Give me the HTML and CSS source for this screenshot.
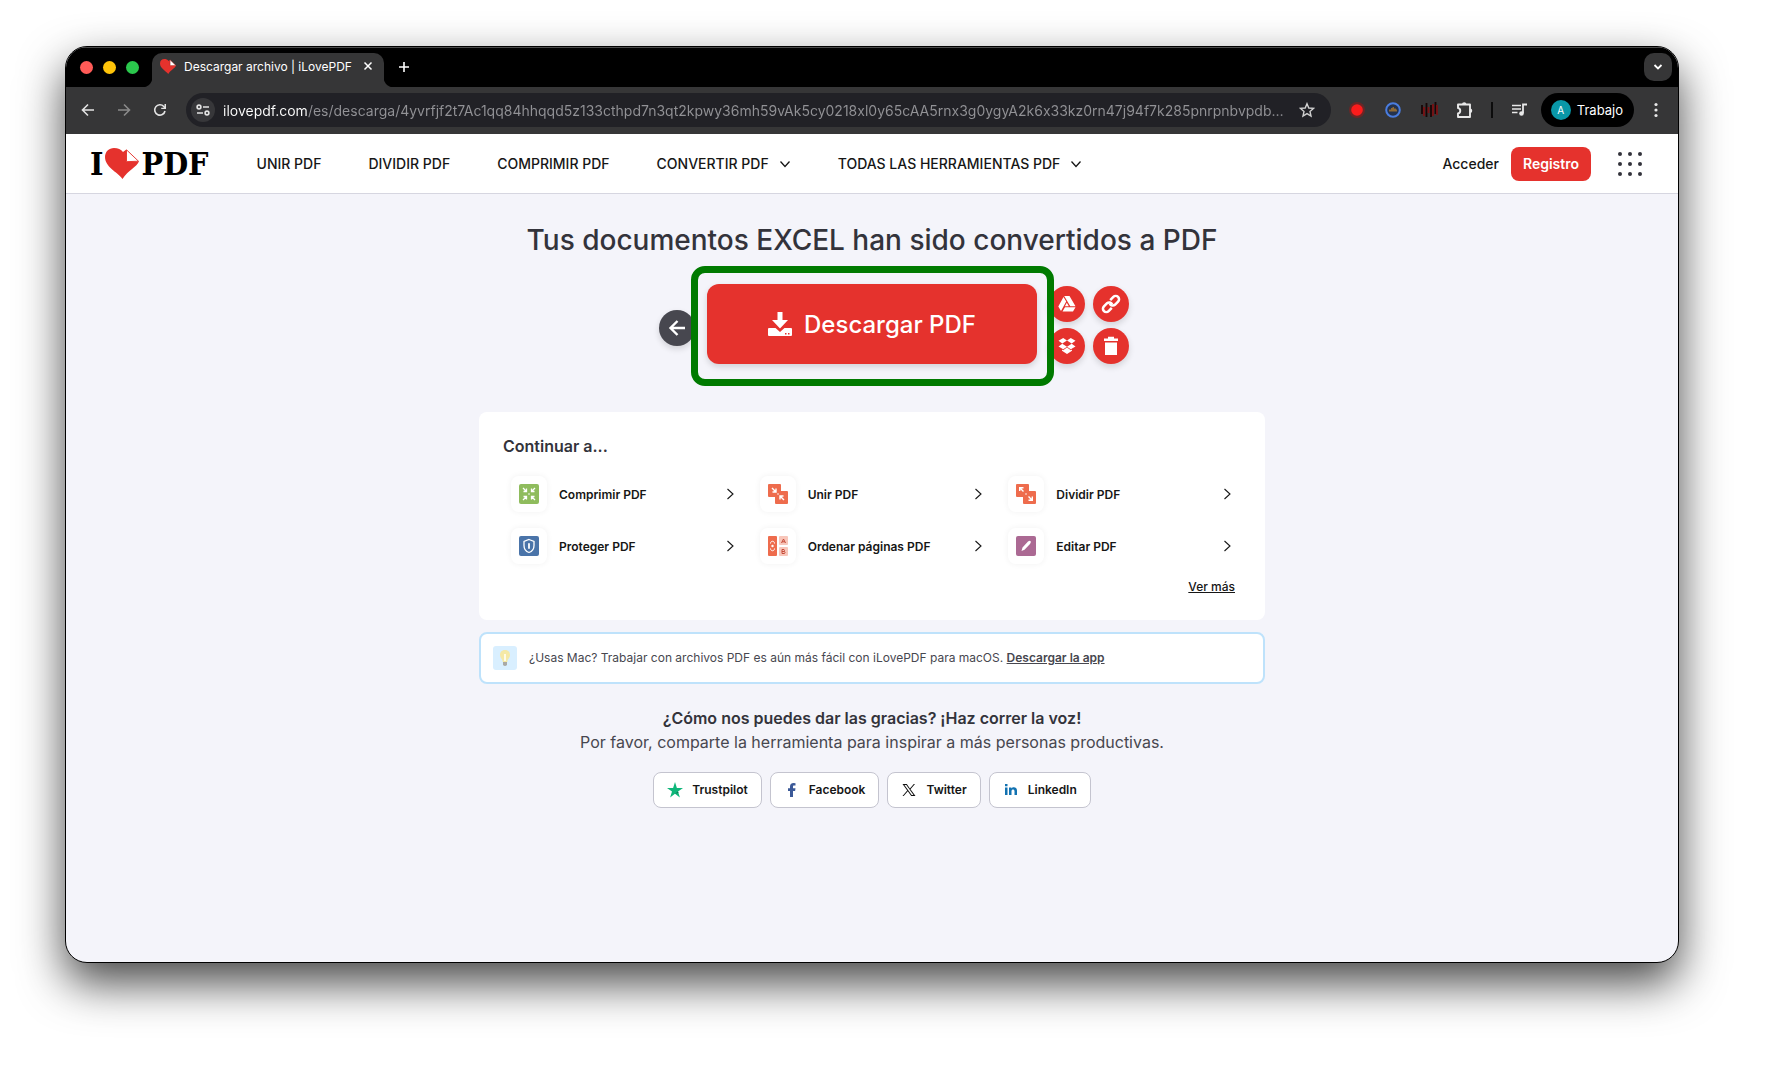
FILE: index.html
```html
<!DOCTYPE html>
<html lang="es">
<head>
<meta charset="utf-8">
<title>Descargar archivo | iLovePDF</title>
<link rel="stylesheet" href="styles.css">
</head>
<body>
<svg class="defs" aria-hidden="true">
  <symbol id="heart" viewBox="0 0 34 34" preserveAspectRatio="none"><path fill="#e5322d" d="M17.500 34 C12 26 0 21 0 10 C0 4 4 0 9 0 C13 0 16 1.500 18 4.500 L21 2 V14.500 H34 C32 21 23 24 17.500 34Z"/><path fill="#fff" stroke="#e5322d" d="M21.500 2 L33.500 14.500 L21.500 15Z"/></symbol>
  <symbol id="chevron" viewBox="0 0 12 12"><path d="M1.500 3.500 6 8.500 10.500 3.500" fill="none" stroke="currentColor" stroke-width="1.300"/></symbol>
  <symbol id="next" viewBox="0 0 12 12"><path d="M3.500 1 9 6 3.500 11" fill="none" stroke="currentColor" stroke-width="1.100"/></symbol>
</svg>

<div class="window">
  <header class="tabstrip">
    <div class="lights"><button class="light red" aria-label="Cerrar"></button><button class="light yellow" aria-label="Minimizar"></button><button class="light green" aria-label="Ampliar"></button></div>
    <div class="tab">
      <svg class="favicon"><use href="#heart"/></svg>
      <span class="tab-title">Descargar archivo | iLovePDF</span>
      <button class="icon-btn small" aria-label="Cerrar pestaña"><svg width="10" height="10" viewBox="0 0 10 10"><path d="M1.500 1.500 8.500 8.500M8.500 1.500 1.500 8.500" stroke="#fff" stroke-width="1.500"/></svg></button>
    </div>
    <button class="icon-btn" aria-label="Nueva pestaña"><svg width="12" height="12" viewBox="0 0 12 12"><path d="M6 1V11M1 6H11" stroke="#fff" stroke-width="1.600"/></svg></button>
    <button class="tab-search" aria-label="Buscar pestañas"><svg width="10" height="10" viewBox="0 0 10 10"><path d="M1.500 3 5 6.500 8.500 3" fill="none" stroke="#fff" stroke-width="1.800"/></svg></button>
  </header>

  <div class="toolbar">
    <div class="history">
      <button class="icon-btn" aria-label="Atrás"><svg width="14" height="14" viewBox="0 0 14 14"><path d="M13 7H2M7 1.500 1.500 7 7 12.500" fill="none" stroke="#e3e3e3" stroke-width="1.600"/></svg></button>
      <button class="icon-btn" aria-label="Adelante"><svg width="14" height="14" viewBox="0 0 14 14"><path d="M1 7H12M7 1.500 12.500 7 7 12.500" fill="none" stroke="#8a8a8a" stroke-width="1.600"/></svg></button>
      <button class="icon-btn" aria-label="Recargar"><svg width="14" height="14" viewBox="0 0 14 14"><path d="M12 8A5.200 5.200 0 1 1 10.800 3.500L12 5" fill="none" stroke="#e3e3e3" stroke-width="1.600"/><path d="M13 1V6H8.200V4.700H11.500V1Z" fill="#e3e3e3"/></svg></button>
    </div>
    <div class="omnibox">
      <button class="site-info" aria-label="Información del sitio"><svg width="14" height="12" viewBox="0 0 14 12" fill="none" stroke="#e3e3e3" stroke-width="1.600"><circle cx="3" cy="3" r="1.900"/><path d="M7 3H13M1 9H7"/><circle cx="11" cy="9" r="1.900"/></svg></button>
      <input class="url" type="text" aria-label="Dirección" value="ilovepdf.com/es/descarga/4yvrfjf2t7Ac1qq84hhqqd5z133cthpd7n3qt2kpwy36mh59vAk5cy0218xl0y65cAA5rnx3g0ygyA2k6x33kz0rn47j94f7k285pnrpnbvpdb…">
      <button class="icon-btn" aria-label="Añadir a marcadores"><svg width="16" height="16" viewBox="0 0 16 16"><path d="M8 1.700 9.800 6 14.500 6.400 11 9.500 12 14 8 11.600 4 14 5 9.500 1.500 6.400 6.200 6Z" fill="none" stroke="#d0d0d0" stroke-width="1.400"/></svg></button>
    </div>
    <div class="extensions">
      <button class="icon-btn" aria-label="Grabadora"><svg width="18" height="18" viewBox="0 0 18 18"><circle cx="9" cy="9" r="8" fill="#6b2626"/><circle cx="9" cy="9" r="5.800" fill="#fb1c1c"/></svg></button>
      <button class="icon-btn" aria-label="Extensión"><svg width="18" height="18" viewBox="0 0 18 18"><circle cx="9" cy="9" r="6.800" fill="#24324d" stroke="#4a7de0" stroke-width="2"/><path d="M5 10.500V8.500H7V7H8.500V6H10V7.500H12V8.500H13V10.500Z" fill="#8f6a35"/></svg></button>
      <button class="icon-btn" aria-label="Audio"><svg width="18" height="18" viewBox="0 0 18 18" stroke-width="1.800"><path d="M2 4V13M6.500 2V16M11 4V16M15.500 1V13" stroke="#180606"/><path d="M4 6V15M8.500 6V12M13 3V15M17 4V14" stroke="#7b1113"/></svg></button>
      <button class="icon-btn" aria-label="Extensiones"><svg width="18" height="18" viewBox="0 0 18 18"><path d="M2 3.500H14V16H2V12.500C5 12 5 7.500 2 7Z" fill="none" stroke="#e8e8e8" stroke-width="1.900" stroke-linejoin="round"/><path d="M6 3.500A2.200 2.200 0 0 1 10.400 3.500ZM14 7.500A2.200 2.200 0 0 1 14 12Z" fill="#e8e8e8"/></svg></button>
      <span class="divider"></span>
      <button class="icon-btn" aria-label="Multimedia"><svg width="18" height="18" viewBox="0 0 18 18"><path d="M2 4.500H11M2 8H11M2 11.500H7.500" stroke="#e8e8e8" stroke-width="1.600"/><path d="M17 3.500H13V12" fill="none" stroke="#e8e8e8" stroke-width="1.800"/><circle cx="11.500" cy="12.500" r="2.300" fill="#e8e8e8"/></svg></button>
    </div>
    <button class="profile"><span class="avatar">A</span>Trabajo</button>
    <button class="icon-btn" aria-label="Menú"><svg width="4" height="16" viewBox="0 0 4 16" fill="#e8e8e8"><circle cx="2" cy="2.500" r="1.600"/><circle cx="2" cy="8" r="1.600"/><circle cx="2" cy="13.500" r="1.600"/></svg></button>
  </div>

  <nav class="site-nav">
    <a class="logo" href="#">I<svg class="logo-heart"><use href="#heart"/></svg>PDF</a>
    <div class="menu">
      <a href="#">UNIR PDF</a>
      <a href="#">DIVIDIR PDF</a>
      <a href="#">COMPRIMIR PDF</a>
      <a href="#">CONVERTIR PDF<svg class="caret"><use href="#chevron"/></svg></a>
      <a href="#">TODAS LAS HERRAMIENTAS PDF<svg class="caret"><use href="#chevron"/></svg></a>
    </div>
    <a class="login" href="#">Acceder</a>
    <a class="register" href="#">Registro</a>
    <button class="icon-btn apps" aria-label="Productos"><svg width="26" height="26" viewBox="0 0 26 26" fill="#33333b"><circle cx="3" cy="3" r="2"/><circle cx="13" cy="3" r="2"/><circle cx="23" cy="3" r="2"/><circle cx="3" cy="13" r="2"/><circle cx="13" cy="13" r="2"/><circle cx="23" cy="13" r="2"/><circle cx="3" cy="23" r="2"/><circle cx="13" cy="23" r="2"/><circle cx="23" cy="23" r="2"/></svg></button>
  </nav>

  <main class="page">
    <h1>Tus documentos EXCEL han sido convertidos a PDF</h1>
    <div class="actions">
      <button class="round back" aria-label="Volver"><svg width="18" height="18" viewBox="0 0 18 18"><path d="M17 9H3M9.500 2 2.500 9 9.500 16" fill="none" stroke="#fff" stroke-width="2.400"/></svg></button>
      <div class="download-wrap">
        <button class="download"><svg width="24" height="24" viewBox="0 0 24 24" fill="#fff"><path d="M9.500 0H14.500V8H20L12 16.500 4 8H9.500Z"/><path fill-rule="evenodd" d="M1 16H7.500L12 20 16.500 16H23Q24 16 24 17V23Q24 24 23 24H1Q0 24 0 23V17Q0 16 1 16ZM17 21V22.500H18.500V21ZM20 21V22.500H21.500V21Z"/></svg>Descargar PDF</button>
        <span class="highlight"></span>
      </div>
      <div class="side">
        <button class="round" aria-label="Guardar en Google Drive"><svg width="18" height="18" viewBox="0 0 18 18"><path fill="#fff" d="M6.200 1H11.500L17.500 11.300H12.300ZM5.500 2 8.200 6.500 3 16 .3 11.500ZM7 12.300H17.500L15 16.500H4.500ZM8.800 7.800 10.800 11.300H6.900Z"/></svg></button>
        <button class="round" aria-label="Compartir enlace"><svg width="20" height="20" viewBox="0 0 18 18"><g transform="rotate(-45 9 9)" fill="none" stroke="#fff" stroke-width="2.300"><path d="M7 12H3A3 3 0 0 1 3 6H7A3 3 0 0 1 9.500 10"/><path d="M11 6H15A3 3 0 0 1 15 12H11A3 3 0 0 1 8.500 8"/></g></svg></button>
        <button class="round" aria-label="Guardar en Dropbox"><svg width="18" height="18" viewBox="0 0 18 18"><path fill="#fff" d="M5.200 1 9 3.600 4.300 6.600.5 3.800ZM12.800 1 17.500 3.800 13.700 6.600 9 3.600ZM.5 9.500 4.300 6.800 9 9.700 5.200 12.300ZM13.700 6.800 17.500 9.500 12.800 12.300 9 9.700ZM9 10.600 12.800 13.200 14 12.500V13.800L9 17 4 13.800V12.500L5.200 13.200Z"/></svg></button>
        <button class="round" aria-label="Eliminar"><svg width="18" height="20" viewBox="0 0 18 20"><path fill="#fff" d="M6 2.500V.8H12V2.500H16V5H2V2.500H5ZM3 6.500H15V19H3Z"/></svg></button>
      </div>
    </div>

    <section class="card">
      <h2>Continuar a...</h2>
      <div class="tools">
        <a class="tool" href="#"><span class="tile"><svg viewBox="0 0 20 20"><rect width="20" height="20" rx="2" fill="#8fbc5d"/><path d="M4 4 7.500 7.500M4.500 7.500H7.500V4.500M16 4 12.500 7.500M12.500 4.500V7.500H15.500M4 16 7.500 12.500M4.500 12.500H7.500V15.500M16 16 12.500 12.500M12.500 15.500V12.500H15.500" fill="none" stroke="#fff" stroke-width="1.300"/><circle cx="10" cy="10" r=".8" fill="#fff"/></svg></span><span class="name">Comprimir PDF</span><svg class="next"><use href="#next"/></svg></a>
        <a class="tool" href="#"><span class="tile"><svg viewBox="0 0 20 20"><path fill="#ee6c4d" d="M1 0H12Q13 0 13 1V7H19Q20 7 20 8V19Q20 20 19 20H8Q7 20 7 19V13H1Q0 13 0 12V1Q0 0 1 0Z"/><path d="M4 4 8 8M4.500 8H8V4.500M16 16 12 12M12 15.500V12H15.500" fill="none" stroke="#fff" stroke-width="1.400"/><circle cx="10" cy="10" r=".8" fill="#fff"/></svg></span><span class="name">Unir PDF</span><svg class="next"><use href="#next"/></svg></a>
        <a class="tool" href="#"><span class="tile"><svg viewBox="0 0 20 20"><path fill="#ee6c4d" d="M1 0H12Q13 0 13 1V7H19Q20 7 20 8V19Q20 20 19 20H8Q7 20 7 19V13H1Q0 13 0 12V1Q0 0 1 0Z"/><path d="M3.500 3.500 7.500 7.500M3.700 7V3.700H7.500M16.500 16.500 12.500 12.500M16.300 12.500V16.300H12.500" fill="none" stroke="#fff" stroke-width="1.400"/><circle cx="10" cy="10" r=".8" fill="#fff"/></svg></span><span class="name">Dividir PDF</span><svg class="next"><use href="#next"/></svg></a>
        <a class="tool" href="#"><span class="tile"><svg viewBox="0 0 20 20"><rect width="20" height="20" rx="2" fill="#4a74a9"/><path d="M10 3.500 15 5.500V9.500C15 13 13 15.500 10 16.500C7 15.500 5 13 5 9.500V5.500Z" fill="none" stroke="#fff" stroke-width="1.300"/><path d="M10 8V12" stroke="#fff" stroke-width="1.800" stroke-linecap="round"/></svg></span><span class="name">Proteger PDF</span><svg class="next"><use href="#next"/></svg></a>
        <a class="tool" href="#"><span class="tile"><svg viewBox="0 0 20 20"><rect width="9" height="20" rx="1" fill="#ee6c4d"/><rect x="11" width="9" height="9" rx="1" fill="#f8c6ba"/><rect x="11" y="11" width="9" height="9" rx="1" fill="#f8c6ba"/><path d="M2.500 7.500C2.500 4.500 6.500 4.500 6.500 7.500M2.500 12.500C2.500 15.500 6.500 15.500 6.500 12.500" fill="none" stroke="#fff"/><circle cx="4.500" cy="10" r="1.200" fill="#fff"/><path d="M13.500 7 15.500 3 17.500 7M14.200 5.800H16.800M14 13.500V17.500H16.500Q17.500 16.500 16.500 15.500H14M14 13.500H16Q17 14.500 16 15.500" fill="none" stroke="#c64a38"/></svg></span><span class="name">Ordenar páginas PDF</span><svg class="next"><use href="#next"/></svg></a>
        <a class="tool" href="#"><span class="tile"><svg viewBox="0 0 20 20"><rect width="20" height="20" rx="2" fill="#ab6993"/><path d="M5.500 15 6.500 11.500 12 5.500Q14 4 14.700 5.300 15.200 6.400 14 8L8.500 13.700ZM5.500 15 8 14.500" fill="#fff"/></svg></span><span class="name">Editar PDF</span><svg class="next"><use href="#next"/></svg></a>
      </div>
      <a class="more" href="#">Ver más</a>
    </section>

    <aside class="tip">
      <svg class="bulb" viewBox="0 0 24 24"><rect width="24" height="24" rx="3" fill="#d9efff"/><path d="M12 4C8.500 4 7 6.500 7 9C7 12 9.500 13 9.800 16H14.200C14.500 13 17 12 17 9C17 6.500 15.500 4 12 4Z" fill="#f5e9a6"/><path d="M11 8V15H13V8" fill="#fffbe6"/><path d="M10 16H14V19Q12 21 10 19Z" fill="#a9a9a5"/></svg>
      <p>¿Usas Mac? Trabajar con archivos PDF es aún más fácil con iLovePDF para macOS. <a href="#">Descargar la app</a></p>
    </aside>

    <section class="thanks">
      <h3>¿Cómo nos puedes dar las gracias? ¡Haz correr la voz!</h3>
      <p>Por favor, comparte la herramienta para inspirar a más personas productivas.</p>
      <div class="share">
        <a href="#"><svg viewBox="0 0 16 16"><path fill="#0fb67a" d="M8 0 9.900 5.900H16L11 9.500 12.900 15.500 8 11.800 3.100 15.500 5 9.500 0 5.900H6.100Z"/><path fill="#0a7a55" d="M11 9.500 11.500 11 8 11.800Z"/></svg>Trustpilot</a>
        <a href="#"><svg viewBox="0 0 16 16"><path fill="#3b5998" d="M6 15V9H4V6.300H6V4.500C6 2.200 7.300 1 9.500 1L11.500 1.200V3.500H10.200C9.200 3.500 9 4 9 4.800V6.300H11.500L11.100 9H9V15Z"/></svg>Facebook</a>
        <a href="#"><svg viewBox="0 0 16 16"><path fill="#111" fill-rule="evenodd" d="M1.500 2H5.800L8.900 6.400 12.800 2H14L9.500 7.200 14.500 14H10.200L6.800 9.300 2.700 14H1.500L6.200 8.400ZM3.400 3 10.700 13H12.500L5.300 3Z"/></svg>Twitter</a>
        <a href="#"><svg viewBox="0 0 16 16"><path fill="#1272b1" d="M2 5.500H4.500V13H2ZM2 2H4.500V4.300H2ZM6 5.500H8.400V6.500C9.500 4.700 14 4.700 14 8.500V13H11.500V9C11.500 6.900 8.500 6.900 8.500 9V13H6Z"/></svg>LinkedIn</a>
      </div>
    </section>
  </main>
</div>
</body>
</html>
```
FILE: styles.css
```css
* { box-sizing: border-box; }
body {
  margin: 0;
  padding: 46px 94px 105px 65px;
  background: #fff;
  font-family: Inter, "Liberation Sans", sans-serif;
  color: #161616;
}
.defs { display: none; }
a { color: inherit; text-decoration: none; }
button { font: inherit; border: 0; padding: 0; cursor: pointer; }
h1, h2, h3, p { margin: 0; }
svg { flex: none; }

.window {
  min-height: calc(100vh - 151px);
  display: flex;
  flex-direction: column;
  overflow: hidden;
  border: 1px solid #000;
  border-radius: 22px;
  background: #f4f4fa;
  box-shadow: 0 20px 46px rgba(0, 0, 0, .72);
}

.icon-btn {
  width: 20px;
  height: 20px;
  display: grid;
  place-items: center;
  background: none;
}
.icon-btn.small { width: 12px; height: 12px; }

/* Tab strip */
.tabstrip {
  height: 40px;
  display: flex;
  align-items: center;
  padding: 0 6px 0 14px;
  background: #000;
  box-shadow: inset 0 1px #4a4a4a;
}
.lights { display: flex; gap: 10px; margin-right: 13px; }
.light { width: 13px; height: 13px; border-radius: 50%; }
.red { background: #ff5b57; }
.yellow { background: #ffc409; }
.green { background: #2bc84d; }
.tab {
  position: relative;
  align-self: flex-end;
  height: 34px;
  width: 232px;
  display: flex;
  align-items: center;
  gap: 8px;
  padding: 0 10px 8px 8px;
  border-radius: 10px 10px 0 0;
  background: #363637;
  color: #fff;
  font-size: 12px;
}
.tab::before, .tab::after {
  content: "";
  position: absolute;
  bottom: 0;
  width: 10px;
  height: 10px;
}
.tab::before { left: -10px; background: radial-gradient(circle at 0 0, #000 10px, #363637 11px); }
.tab::after { right: -10px; background: radial-gradient(circle at 100% 0, #000 10px, #363637 11px); }
.favicon { width: 16px; height: 15px; }
.tab-title { flex: 1; white-space: nowrap; }
.tab + .icon-btn { margin-left: 10px; }
.tab-search {
  width: 28px;
  height: 28px;
  margin-left: auto;
  display: grid;
  place-items: center;
  border-radius: 10px;
  background: #363637;
}

/* Toolbar */
.toolbar {
  height: 47px;
  display: flex;
  align-items: center;
  padding: 0 12px 1px;
  background: #363637;
}
.history { display: flex; gap: 16px; margin-right: 16px; }
.omnibox {
  flex: 1;
  min-width: 0;
  height: 34px;
  display: flex;
  align-items: center;
  gap: 8px;
  padding: 0 14px 0 5px;
  border-radius: 17px;
  background: #212126;
}
.site-info {
  flex: none;
  width: 24px;
  height: 24px;
  display: grid;
  place-items: center;
  border-radius: 50%;
  background: #37373a;
}
.url {
  flex: 1;
  min-width: 0;
  padding: 0;
  border: 0;
  outline: 0;
  font: 14px Inter, sans-serif;
  font-feature-settings: "calt" 0;
  color: transparent;
  background: linear-gradient(90deg, #fff 85px, #929296 85px);
  -webkit-background-clip: text;
  background-clip: text;
}
.extensions { display: flex; align-items: center; gap: 16px; margin: 0 12px 0 16px; }
.divider { width: 2px; height: 16px; background: #0c0c0c; }
.profile {
  height: 34px;
  display: flex;
  align-items: center;
  gap: 6px;
  margin-right: 12px;
  padding: 0 11px 0 10px;
  border-radius: 17px;
  background: #000;
  color: #fff;
  font-size: 13px;
}
.avatar {
  width: 20px;
  height: 20px;
  border-radius: 50%;
  background: #0997a7;
  font-size: 10px;
  line-height: 20px;
  text-align: center;
}

/* Site navigation */
.site-nav {
  height: 60px;
  display: flex;
  align-items: center;
  padding: 0 35px 0 24px;
  background: #fff;
  border-bottom: 1px solid #d6d6e0;
  font-size: 14px;
  font-weight: 500;
  white-space: nowrap;
}
.logo {
  display: flex;
  align-items: center;
  margin-right: 48px;
  color: #000;
  font: bold 32px "DejaVu Serif Condensed", "DejaVu Serif", serif;
}
.logo-heart { width: 34px; height: 31px; margin: 0 2px; }
.menu { flex: 1; display: flex; gap: 47px; }
.menu a { display: flex; align-items: center; gap: 10px; }
.caret { width: 12px; height: 12px; }
.register {
  margin: 0 26px 0 12px;
  padding: 0 12px;
  border-radius: 8px;
  background: #e5322d;
  color: #fff;
  font-weight: 600;
  line-height: 34px;
}
.icon-btn.apps { width: 26px; height: 26px; }

/* Download area */
.page {
  flex: 1;
  display: flex;
  flex-direction: column;
  align-items: center;
  padding: 28px 24px;
}
h1 { color: #33333b; font-size: 28px; font-weight: 500; line-height: 36px; }
.actions { display: flex; align-items: center; gap: 12px; margin-top: 26px; margin-left: 44px; }
.round {
  width: 36px;
  height: 36px;
  display: grid;
  place-items: center;
  border-radius: 50%;
  background: #e5322d;
  box-shadow: 0 3px 6px rgba(0, 0, 0, .14);
}
.back { margin-top: 8px; background: #47474f; }
.download-wrap { position: relative; }
.download {
  width: 330px;
  height: 80px;
  display: flex;
  align-items: center;
  justify-content: center;
  gap: 12px;
  border-radius: 12px;
  background: #e5322d;
  box-shadow: 0 3px 6px rgba(0, 0, 0, .14);
  color: #fff;
  font-size: 24px;
  font-weight: 500;
}
.highlight {
  position: absolute;
  inset: -18px -17px -22px -16px;
  border: 7px solid #007a00;
  border-radius: 14px;
  pointer-events: none;
}
.side { display: grid; grid-template-columns: 36px 36px; gap: 6px 8px; margin-top: 2px; }

/* Next steps card */
.card {
  width: 100%;
  max-width: 786px;
  display: flex;
  flex-direction: column;
  margin-top: 48px;
  padding: 22px 24px 25px;
  border-radius: 8px;
  background: #fff;
}
h2 { color: #33333b; font-size: 16px; font-weight: 600; line-height: 24px; }
.tools { display: grid; grid-template-columns: repeat(3, 1fr); gap: 16px; margin: 18px 0 15px; padding-left: 8px; }
.tool { display: flex; align-items: center; gap: 12px; font-size: 12px; font-weight: 600; }
.tile {
  width: 36px;
  height: 36px;
  display: grid;
  place-items: center;
  border-radius: 8px;
  box-shadow: 0 0 6px rgba(0, 0, 0, .06);
}
.tile svg { width: 20px; height: 20px; }
.name { flex: 1; white-space: nowrap; }
.next { width: 12px; height: 12px; margin-right: 8px; }
.more { align-self: flex-end; margin-right: 6px; font-size: 12px; font-weight: 500; line-height: 16px; text-decoration: underline; }

.tip {
  width: 100%;
  max-width: 786px;
  display: flex;
  align-items: center;
  gap: 12px;
  margin-top: 12px;
  padding: 12px;
  border: 2px solid #bee2fb;
  border-radius: 8px;
  background: #fff;
  color: #47474f;
  font-size: 12px;
  line-height: 24px;
}
.bulb { width: 24px; height: 24px; }
.tip a { font-weight: 600; text-decoration: underline; }

/* Share */
.thanks { margin-top: 22px; text-align: center; line-height: 24px; }
h3 { color: #33333b; font-size: 16px; font-weight: 600; }
.thanks p { color: #47474f; font-size: 16px; }
.share { display: flex; justify-content: center; gap: 8px; margin-top: 18px; }
.share a {
  height: 36px;
  display: flex;
  align-items: center;
  gap: 9px;
  padding: 0 13px;
  border: 1px solid #c4c4cf;
  border-radius: 8px;
  background: #fff;
  font-size: 12px;
  font-weight: 600;
}
.share svg { width: 16px; height: 16px; }
```
